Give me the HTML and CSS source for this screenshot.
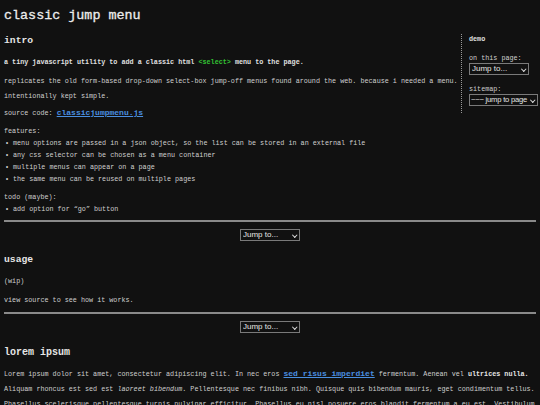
FILE: index.html
```html
<!DOCTYPE html>
<html>
<head>
<meta charset="utf-8">
<link rel="stylesheet" href="styles.css">
</head>
<body>
<h1 class="title">classic jump menu</h1>
<div class="top">
  <div class="main">
    <h2 class="head">intro</h2>
    <p class="tagline">a tiny javascript utility to add a classic html <span class="tag">&lt;select&gt;</span> menu to the page.</p>
    <p class="para">replicates the old form-based drop-down select-box jump-off menus found around the web. because i needed a menu. intentionally kept simple.</p>
    <p class="para src">source code: <a class="link" href="#">classicjumpmenu.js</a></p>
    <p class="label">features:</p>
    <ul class="list">
      <li>menu options are passed in a json object, so the list can be stored in an external file</li>
      <li>any css selector can be chosen as a menu container</li>
      <li>multiple menus can appear on a page</li>
      <li>the same menu can be reused on multiple pages</li>
    </ul>
    <p class="label todo">todo (maybe):</p>
    <ul class="list">
      <li>add option for “go” button</li>
    </ul>
  </div>
  <aside class="side">
    <div class="side-head">demo</div>
    <div class="side-label">on this page:</div>
    <span class="sel-wrap"><select class="sel sel-a"><option>Jump to...</option></select></span>
    <div class="side-label second">sitemap:</div>
    <span class="sel-wrap"><select class="sel sel-b"><option>~~~ jump to page</option></select></span>
  </aside>
</div>
<hr class="rule">
<div class="jump"><span class="sel-wrap"><select class="sel sel-a"><option>Jump to...</option></select></span></div>
<h2 class="head usage">usage</h2>
<p class="note">(wip)</p>
<p class="note view">view source to see how it works.</p>
<hr class="rule rule2">
<div class="jump"><span class="sel-wrap"><select class="sel sel-a"><option>Jump to...</option></select></span></div>
<h2 class="head lorem-h">lorem ipsum</h2>
<p class="lorem">Lorem ipsum dolor sit amet, consectetur adipiscing elit. In nec eros <a class="link" href="#">sed risus imperdiet</a> fermentum. Aenean vel <b class="strong">ultrices nulla.</b> Aliquam rhoncus est sed est <i>laoreet bibendum</i>. Pellentesque nec finibus nibh. Quisque quis bibendum mauris, eget condimentum tellus. Phasellus scelerisque pellentesque turpis pulvinar efficitur. Phasellus eu nisl posuere eros blandit fermentum a eu est. Vestibulum ante ipsum primis in faucibus orci luctus et ultrices posuere cubilia curae; Donec vitae lorem sit amet sem tempor gravida.</p>
</body>
</html>
```
FILE: styles.css
```css
html, body {
  background: #111111;
}
body {
  margin: 0;
  padding: 4px 4px 0 4px;
  color: #cfcfcf;
  font-family: "Liberation Mono", "DejaVu Sans Mono", monospace;
  font-size: 6.75px;
  overflow: hidden;
}
p, ul, h1, h2 {
  margin: 0;
  padding: 0;
}
.title {
  font-size: 13.4px;
  line-height: 24px;
  font-weight: normal;
  color: #ececec;
  -webkit-text-stroke: 0.3px #ececec;
}
.top {
  display: flex;
  align-items: flex-start;
  margin-top: 5px;
}
.main {
  width: 457px;
  flex: none;
}
.head {
  font-size: 9.7px;
  line-height: 16px;
  font-weight: bold;
  color: #e6e6e6;
}
.tagline {
  font-weight: bold;
  line-height: 12px;
  margin-top: 7px;
  color: #e0e0e0;
}
.tag {
  color: #33c233;
}
.para {
  line-height: 15px;
  margin-top: 6px;
}
.src {
  margin-top: 1px;
}
.link {
  color: #4a8fe0;
  font-size: 8px;
  font-weight: bold;
  text-decoration: underline;
}
.label {
  line-height: 12px;
  margin-top: 4px;
}
.todo {
  margin-top: 6px;
}
.list {
  list-style: none;
  line-height: 12px;
}
.list li::before {
  content: "•";
  display: inline-block;
  width: 8px;
  padding-left: 1px;
}
.side {
  flex: 1;
  margin-top: 1px;
  border-left: 1px dotted #9a9a9a;
  padding: 0 0 7px 7px;
  display: flex;
  flex-direction: column;
  align-items: flex-start;
}
.side-head {
  font-weight: bold;
  line-height: 10px;
  color: #e0e0e0;
}
.side-label {
  line-height: 10px;
  margin-top: 9px;
}
.second {
  margin-top: 9px;
}
.sel-wrap {
  position: relative;
  display: inline-block;
  line-height: 0;
}
.sel-wrap::after {
  content: "";
  position: absolute;
  right: 4px;
  top: 3.5px;
  width: 2.5px;
  height: 2.5px;
  border-right: 1px solid #e0e0e0;
  border-bottom: 1px solid #e0e0e0;
  transform: rotate(45deg);
  pointer-events: none;
}
.sel {
  -webkit-appearance: none;
  appearance: none;
  font-family: "Liberation Sans", Arial, sans-serif;
  font-size: 8px;
  line-height: 10px;
  height: 12px;
  box-sizing: border-box;
  padding: 0 8px 0 2px;
  background-color: #111111;
  color: #e6e6e6;
  border: 1px solid #7a7a7a;
  border-radius: 0;
  margin: 0;
}
.sel-a {
  width: 60px;
}
.sel-b {
  width: 69px;
  font-size: 7.6px;
  letter-spacing: -0.2px;
  padding: 0 0 0 1px;
}
.rule {
  border: 0;
  border-top: 2px solid #8a8a8a;
  margin: 5px 0 0 0;
  height: 0;
}
.jump {
  display: flex;
  justify-content: center;
  margin-top: 7px;
}
.usage {
  margin-top: 11px;
}
.note {
  line-height: 12px;
  margin-top: 7px;
}
.rule2 {
  margin-top: 6px;
}
.lorem-h {
  margin-top: 12px;
  font-size: 10px;
}
.lorem {
  line-height: 15px;
  margin-top: 5px;
}
.strong {
  color: #e6e6e6;
}
```
